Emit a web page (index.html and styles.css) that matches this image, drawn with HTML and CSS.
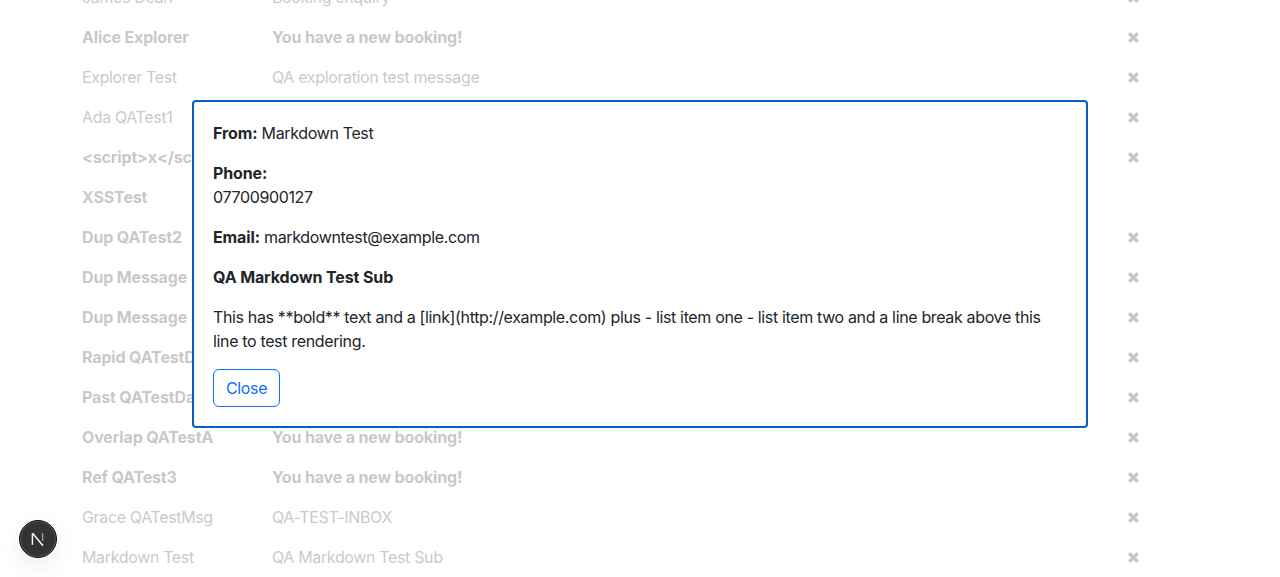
FILE: index.html
```html
<!DOCTYPE html>
<html lang="en">
<head>
<meta charset="utf-8">
<title>Messages</title>
<link rel="stylesheet" href="styles.css">
</head>
<body>
<main class="list">
  <div class="row"><span class="name">James Dean</span><span class="subject">Booking enquiry</span><span class="del"><svg viewBox="0 0 12 12"><path d="M2 2l8 8M10 2l-8 8"/></svg></span></div>
  <div class="row unread"><span class="name">Alice Explorer</span><span class="subject">You have a new booking!</span><span class="del"><svg viewBox="0 0 12 12"><path d="M2 2l8 8M10 2l-8 8"/></svg></span></div>
  <div class="row"><span class="name">Explorer Test</span><span class="subject">QA exploration test message</span><span class="del"><svg viewBox="0 0 12 12"><path d="M2 2l8 8M10 2l-8 8"/></svg></span></div>
  <div class="row"><span class="name">Ada QATest1</span><span class="subject">QA test message</span><span class="del"><svg viewBox="0 0 12 12"><path d="M2 2l8 8M10 2l-8 8"/></svg></span></div>
  <div class="row unread"><span class="name">&lt;script&gt;x&lt;/script&gt;</span><span class="subject">You have a new booking!</span><span class="del"><svg viewBox="0 0 12 12"><path d="M2 2l8 8M10 2l-8 8"/></svg></span></div>
  <div class="row unread"><span class="name">XSSTest</span><span class="subject">You have a new booking!</span><span class="del"></span></div>
  <div class="row unread"><span class="name">Dup QATest2</span><span class="subject">You have a new booking!</span><span class="del"><svg viewBox="0 0 12 12"><path d="M2 2l8 8M10 2l-8 8"/></svg></span></div>
  <div class="row unread"><span class="name">Dup Message</span><span class="subject">You have a new booking!</span><span class="del"><svg viewBox="0 0 12 12"><path d="M2 2l8 8M10 2l-8 8"/></svg></span></div>
  <div class="row unread"><span class="name">Dup Message</span><span class="subject">You have a new booking!</span><span class="del"><svg viewBox="0 0 12 12"><path d="M2 2l8 8M10 2l-8 8"/></svg></span></div>
  <div class="row unread"><span class="name">Rapid QATestDay</span><span class="subject">You have a new booking!</span><span class="del"><svg viewBox="0 0 12 12"><path d="M2 2l8 8M10 2l-8 8"/></svg></span></div>
  <div class="row unread"><span class="name">Past QATestDay</span><span class="subject">You have a new booking!</span><span class="del"><svg viewBox="0 0 12 12"><path d="M2 2l8 8M10 2l-8 8"/></svg></span></div>
  <div class="row unread"><span class="name">Overlap QATestA</span><span class="subject">You have a new booking!</span><span class="del"><svg viewBox="0 0 12 12"><path d="M2 2l8 8M10 2l-8 8"/></svg></span></div>
  <div class="row unread"><span class="name">Ref QATest3</span><span class="subject">You have a new booking!</span><span class="del"><svg viewBox="0 0 12 12"><path d="M2 2l8 8M10 2l-8 8"/></svg></span></div>
  <div class="row"><span class="name">Grace QATestMsg</span><span class="subject">QA-TEST-INBOX</span><span class="del"><svg viewBox="0 0 12 12"><path d="M2 2l8 8M10 2l-8 8"/></svg></span></div>
  <div class="row"><span class="name">Markdown Test</span><span class="subject">QA Markdown Test Sub</span><span class="del"><svg viewBox="0 0 12 12"><path d="M2 2l8 8M10 2l-8 8"/></svg></span></div>
</main>
<div class="backdrop"></div>
<section class="modal">
  <p><strong>From:</strong> Markdown Test</p>
  <p><strong>Phone:</strong><br>07700900127</p>
  <p><strong>Email:</strong> markdowntest@example.com</p>
  <p><strong>QA Markdown Test Sub</strong></p>
  <p>This has **bold** text and a [link](http://example.com) plus - list item one - list item two and a line break above this line to test rendering.</p>
  <button class="close" type="button">Close</button>
</section>
<div class="devtools"><svg viewBox="0 0 16 16"><path class="n1" d="M2.4 2.2v11.6"/><path class="n2" d="M2.6 2.2l10.4 12.6"/><path class="n3" d="M12.6 2.2v7.8"/></svg></div>
</body>
</html>
```
FILE: styles.css
```css
* { box-sizing: border-box; }
html, body { height: 100%; }
body {
  margin: 0;
  overflow: hidden;
  background: #fff;
  color: #212529;
  font: 400 16px/24px Inter, "Liberation Sans", sans-serif;
  letter-spacing: -0.35px;
}
.list { margin-top: -23px; padding: 0 141px 0 82px; }
.row {
  display: grid;
  grid-template-columns: 190px 1fr 12px;
  align-items: center;
  height: 40px;
  white-space: nowrap;
}
.name, .subject { overflow: hidden; }
.unread { font-weight: 700; letter-spacing: -0.15px; }
.del { display: flex; width: 12px; height: 12px; justify-content: center; align-items: center; }
.del svg { width: 13px; height: 13px; flex: none; fill: none; stroke: #212529; stroke-width: 3.2; }
.backdrop { position: fixed; inset: 0; background: rgba(255, 255, 255, .75); }
.modal {
  position: fixed;
  left: 192px;
  top: 100px;
  width: 896px;
  height: 328px;
  padding: 19px;
  background: #fff;
  border: 2px solid #005fcc;
  border-radius: 4px;
}
.modal p { margin: 0 0 16px; }
.modal strong { font-weight: 700; letter-spacing: -0.12px; }
.close {
  height: 38px;
  padding: 6px 12px;
  font: inherit;
  letter-spacing: inherit;
  color: #0d6efd;
  background: #fff;
  border: 1px solid #0d6efd;
  border-radius: 6px;
}
.devtools {
  position: fixed;
  left: 19px;
  top: 520px;
  width: 38px;
  height: 38px;
  display: flex;
  align-items: center;
  justify-content: center;
  background: #333;
  border: 1px solid #111;
  border-radius: 50%;
  box-shadow: 0 0 0 1px #555 inset, 0 8px 24px rgba(0, 0, 0, .08);
}
.devtools svg { width: 16px; height: 16px; fill: none; stroke-width: 1.4; }
.n1, .n2 { stroke: #fff; }
.n3 { stroke: #999; }
```
